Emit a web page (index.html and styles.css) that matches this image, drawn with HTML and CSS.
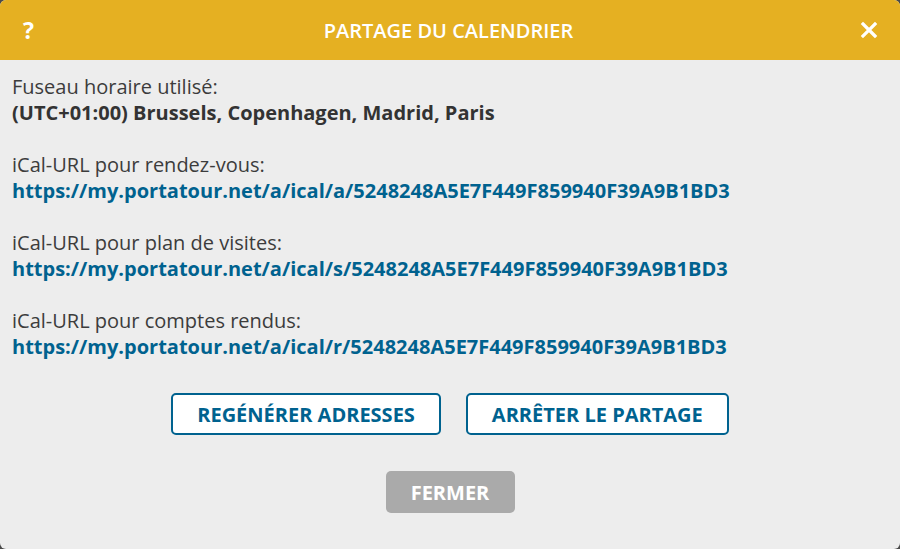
FILE: index.html
```html
<!DOCTYPE html>
<html lang="fr">
<head>
<meta charset="utf-8">
<title>Partage du calendrier</title>
<link rel="stylesheet" href="styles.css">
</head>
<body>
<div class="dialog">
  <header class="dialog-header">
    <span class="help">?</span>
    <h1 class="title">PARTAGE DU CALENDRIER</h1>
    <span class="close">
      <svg width="18" height="18" viewBox="0 0 18 18"><path d="M3 3 L15 15 M15 3 L3 15" stroke="#fff" stroke-width="3.2" stroke-linecap="square" fill="none"/></svg>
    </span>
  </header>
  <main class="dialog-body">
    <div class="group">
      <div class="label">Fuseau horaire utilisé:</div>
      <div class="value">(UTC+01:00) Brussels, Copenhagen, Madrid, Paris</div>
    </div>
    <div class="group">
      <div class="label">iCal-URL pour rendez-vous:</div>
      <a class="link">https://my.portatour.net/a/ical/a/5248248A5E7F449F859940F39A9B1BD3</a>
    </div>
    <div class="group">
      <div class="label">iCal-URL pour plan de visites:</div>
      <a class="link">https://my.portatour.net/a/ical/s/5248248A5E7F449F859940F39A9B1BD3</a>
    </div>
    <div class="group last">
      <div class="label">iCal-URL pour comptes rendus:</div>
      <a class="link">https://my.portatour.net/a/ical/r/5248248A5E7F449F859940F39A9B1BD3</a>
    </div>
    <div class="actions">
      <button class="btn-outline">REGÉNÉRER ADRESSES</button>
      <button class="btn-outline">ARRÊTER LE PARTAGE</button>
    </div>
    <div class="footer">
      <button class="btn-close">FERMER</button>
    </div>
  </main>
</div>
</body>
</html>
```

FILE: styles.css
```css
html, body {
  margin: 0;
  padding: 0;
  height: 100%;
}
body {
  background: #4a4a4a;
  font-family: "Open Sans", "Liberation Sans", sans-serif;
}
.dialog {
  width: 900px;
  height: 549px;
  background: #ededed;
  border-radius: 6px;
  overflow: hidden;
  display: flex;
  flex-direction: column;
}
.dialog-header {
  height: 60px;
  background: #e5b022;
  display: flex;
  align-items: center;
  justify-content: space-between;
  padding: 0 22px 0 23px;
  color: #fff;
  flex-shrink: 0;
}
.help {
  font-size: 23px;
  font-weight: 700;
  width: 14px;
}
.title {
  margin: 0;
  font-size: 20px;
  font-weight: 600;
  letter-spacing: 0;
}
.close {
  display: flex;
  width: 18px;
  height: 18px;
}
.dialog-body {
  padding: 14px 12px 0 12px;
  color: #333;
  font-size: 20px;
  line-height: 26px;
}
.group {
  margin-bottom: 26px;
}
.group.last {
  margin-bottom: 33px;
}
.label {
  color: #3c3c3c;
}
.value {
  font-weight: 700;
  color: #333;
}
.link {
  display: block;
  font-weight: 700;
  color: #00628f;
  text-decoration: none;
}
.actions {
  display: flex;
  justify-content: center;
  gap: 25px;
}
.btn-outline {
  font-family: inherit;
  box-sizing: border-box;
  height: 42px;
  background: #fff;
  border: 2px solid #00628f;
  border-radius: 5px;
  color: #00628f;
  font-size: 20px;
  font-weight: 700;
  padding: 0 24px;
}
.footer {
  display: flex;
  justify-content: center;
  margin-top: 36px;
}
.btn-close {
  font-family: inherit;
  box-sizing: border-box;
  width: 129px;
  height: 42px;
  background: #aaaaaa;
  border: none;
  border-radius: 5px;
  color: #fff;
  font-size: 20px;
  font-weight: 700;
}
```
